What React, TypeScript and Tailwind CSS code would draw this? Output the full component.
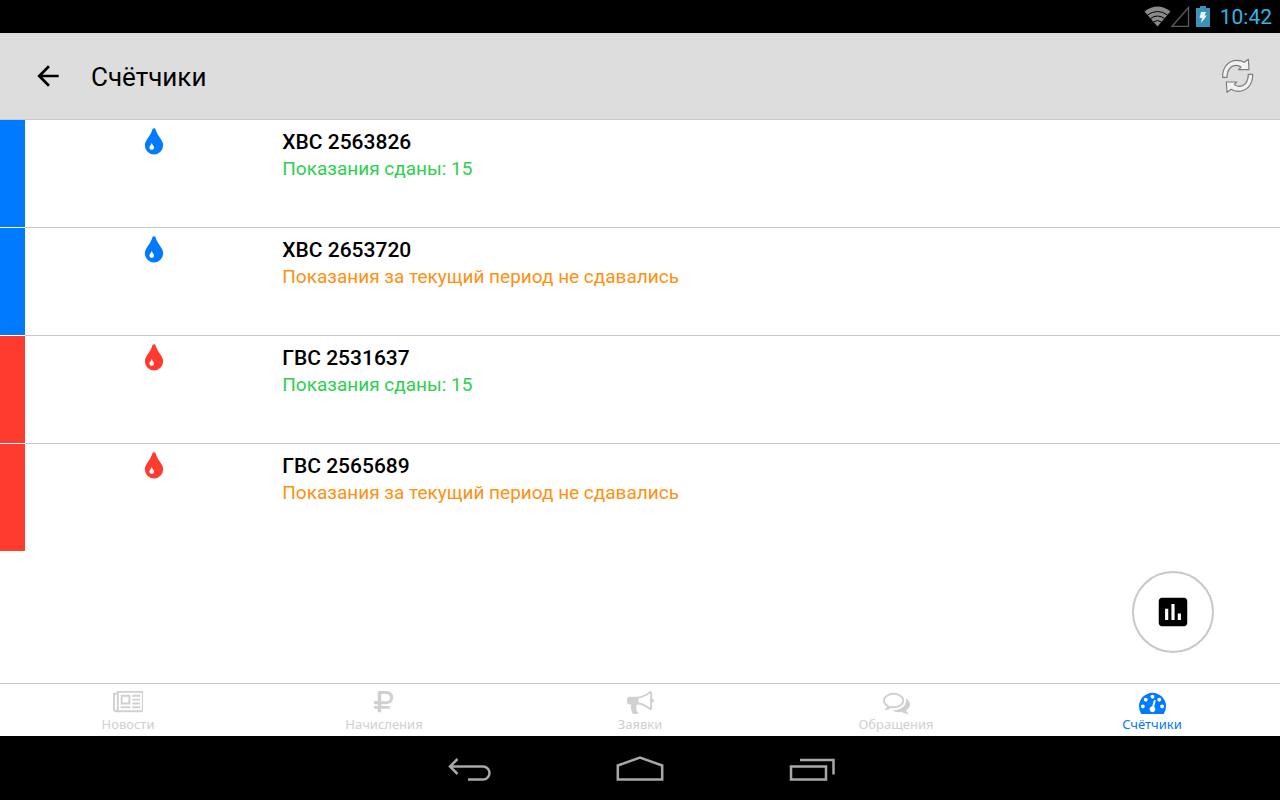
import { useState } from 'react';

type Meter = {
  id: string;
  kind: 'cold' | 'hot';
  title: string;
  status: string;
  submitted: boolean;
};

const METERS: Meter[] = [
  { id: '2563826', kind: 'cold', title: 'ХВС 2563826', status: 'Показания сданы: 15', submitted: true },
  { id: '2653720', kind: 'cold', title: 'ХВС 2653720', status: 'Показания за текущий период не сдавались', submitted: false },
  { id: '2531637', kind: 'hot', title: 'ГВС 2531637', status: 'Показания сданы: 15', submitted: true },
  { id: '2565689', kind: 'hot', title: 'ГВС 2565689', status: 'Показания за текущий период не сдавались', submitted: false },
];

const TABS = [
  {
    label: 'Новости',
    viewBox: '0 0 2048 1792',
    path: 'M1024 512h-384v384h384v-384zm128 640v128h-640v-128h640zm0-768v640h-640v-640h640zm640 768v128h-512v-128h512zm0-256v128h-512v-128h512zm0-256v128h-512v-128h512zm0-256v128h-512v-128h512zm-1536 960v-960h-128v960q0 26 19 45t45 19 45-19 19-45zm1664 0v-1088h-1536v1088q0 33-11 64h1483q26 0 45-19t19-45zm128-1216v1216q0 80-56 136t-136 56h-1664q-80 0-136-56t-56-136v-1088h256v-128h1792z',
  },
  {
    label: 'Начисления',
    viewBox: '0 0 1792 1792',
    path: 'M1265 576q0-105-72-173t-185-68h-328v482h328q113 0 185-68t72-173zm210 0q0 190-124.5 311.5t-319.5 121.5h-351v118h527q14 0 23 9t9 23v128q0 14-9 23t-23 9h-527v185q0 14-9.5 23t-22.5 9h-167q-14 0-23-9t-9-23v-185h-224q-14 0-23-9t-9-23v-128q0-14 9-23t23-9h224v-118h-224q-14 0-23-9t-9-23v-149q0-13 9-22.5t23-9.5h224v-629q0-14 9-23t23-9h550q195 0 319.5 121.5t124.5 311.5z',
  },
  {
    label: 'Заявки',
    viewBox: '0 0 1792 1792',
    path: 'M1664 640q53 0 90.5 37.5t37.5 90.5-37.5 90.5-90.5 37.5v384q0 52-38 90t-90 38q-417-347-812-380-58 19-91 66t-31 100.5 40 92.5q-20 33-23 65.5t6 58 33.5 55 48 50 61.5 50.5q-29 58-111.5 83t-168.5 11.5-132-55.5q-7-23-29.5-87.5t-32-94.5-23-89-15-101 3.5-98.5 22-110.5h-122q-66 0-113-47t-47-113v-192q0-66 47-113t113-47h480q435 0 896-384 52 0 90 38t38 90v384zm-128 604v-954q-394 302-768 343v270q377 42 768 341z',
  },
  {
    label: 'Обращения',
    viewBox: '0 0 1792 1792',
    path: 'M704 384q-153 0-286 52t-211.5 141-78.5 191q0 82 53 158t149 132l97 56-35 84q34-20 62-39l44-31 53 10q78 14 153 14 153 0 286-52t211.5-141 78.5-191-78.5-191-211.5-141-286-52zm0-128q191 0 353.5 68.5t256.5 186.5 94 257-94 257-256.5 186.5-353.5 68.5q-86 0-176-16-124 88-278 128-36 9-86 16h-3q-11 0-20.5-8t-11.5-21q-1-3-1-6.5t.5-6.5 2-6l2.5-5 3.5-5.5 4-5 4.5-5 4-4.5q5-6 23-25t26-29.5 22.5-29 25-38.5 20.5-44q-124-72-195-177t-71-224q0-139 94-257t256.5-186.5 353.5-68.5zm822 1169q10 24 20.5 44t25 38.5 22.5 29 26 29.5 23 25q1 1 4 4.5t4.5 5 4 5 3.5 5.5l2.5 5 2 6 .5 6.5-1 6.5q-3 14-13 22t-22 7q-50-7-86-16-154-40-278-128-90 16-176 16-271 0-472-132 58 4 88 4 161 0 309-45t264-129q125-92 192-212t67-254q0-77-23-152 129 71 204 178t75 230q0 120-71 224.5t-195 176.5z',
  },
  {
    label: 'Счётчики',
    viewBox: '0 0 1792 1792',
    path: 'M384 1152q0-53-37.5-90.5t-90.5-37.5-90.5 37.5-37.5 90.5 37.5 90.5 90.5 37.5 90.5-37.5 37.5-90.5zm192-448q0-53-37.5-90.5t-90.5-37.5-90.5 37.5-37.5 90.5 37.5 90.5 90.5 37.5 90.5-37.5 37.5-90.5zm428 481l101-382q6-26-7.5-48.5t-38.5-29.5-48 6.5-30 39.5l-101 382q-60 5-107 43.5t-63 98.5q-20 77 20 146t117 89 146-20 89-117q16-60-6-117t-72-91zm660-33q0-53-37.5-90.5t-90.5-37.5-90.5 37.5-37.5 90.5 37.5 90.5 90.5 37.5 90.5-37.5 37.5-90.5zm-640-640q0-53-37.5-90.5t-90.5-37.5-90.5 37.5-37.5 90.5 37.5 90.5 90.5 37.5 90.5-37.5 37.5-90.5zm448 192q0-53-37.5-90.5t-90.5-37.5-90.5 37.5-37.5 90.5 37.5 90.5 90.5 37.5 90.5-37.5 37.5-90.5zm320 448q0 261-141 483-19 29-54 29h-1402q-35 0-54-29-141-221-141-483 0-182 71-348t191-286 286-191 348-71 348 71 286 191 191 286 71 348z',
  },
];

const REFRESH_ARROW =
  'M278 233C277 202 296 182 321 182C330 182 337 184 343 188L355 179L357 210L326 210L333 202C328 198 324 197 319 197C302 197 291 211 291 233Z';

function StatusBar() {
  return (
    <div className="flex h-[33px] shrink-0 items-center justify-end bg-black pr-2">
      <svg className="h-[21px] w-[27px]" viewBox="0 0 27 21" fill="none">
        <path d="M0.5 5.5Q13.5 -4.5 26.5 5.5L13.5 20.5Z" fill="#8a8a8a" />
        <path d="M3.5 9Q13.5 2 23.5 9M6.5 12.5Q13.5 7.5 20.5 12.5M9.5 16Q13.5 13 17.5 16" stroke="#000" />
      </svg>
      <svg className="h-[21px] w-[19px]" viewBox="0 0 19 21" fill="none">
        <path d="M17.5 1.5V20.5H0.9Z" stroke="#5c5c5c" strokeWidth="1.3" />
      </svg>
      <svg className="ml-1.5 h-[21px] w-[14px]" viewBox="0 0 14 21">
        <path d="M4 0H10V2H14V21H0V2H4Z" fill="#3a93bb" />
        <path d="M5 6H10L8.5 9.5H11L5 17L6 12H3.5Z" fill="#e6f6fc" />
      </svg>
      <time className="ml-2.5 pt-px text-[21px] leading-8 text-[#33b5e5]">10:42</time>
    </div>
  );
}

function Header() {
  return (
    <header className="flex h-[87px] shrink-0 items-center border-b border-[#c8c8c8] bg-[#dddddd] pr-[25px] pl-8">
      <button type="button" aria-label="Назад" className="flex size-8 items-center justify-center">
        <svg className="size-8" viewBox="0 0 24 24" fill="#000">
          <path d="M20 11H7.83l5.59-5.59L12 4l-8 8 8 8 1.41-1.41L7.83 13H20v-2z" />
        </svg>
      </button>
      <h1 className="ml-[27px] flex-1 pt-0.5 text-[26px] leading-8 text-black">Счётчики</h1>
      <button type="button" aria-label="Обновить" className="flex items-center">
        <svg
          className="h-[38px] w-[35px]"
          viewBox="270 172 105 114"
          fill="#f2f2f2"
          stroke="#7c7c7c"
          strokeWidth="3.5"
          strokeLinejoin="round"
        >
          <path d={REFRESH_ARROW} />
          <path d={REFRESH_ARROW} transform="rotate(180 323 228.5)" />
        </svg>
      </button>
    </header>
  );
}

function MeterRow({ meter }: { meter: Meter }) {
  const cold = meter.kind === 'cold';
  return (
    <li className="group flex h-[108px]">
      <div className={`mb-px w-[25px] ${cold ? 'bg-[#007aff]' : 'bg-[#ff3b30]'}`} />
      <div className="flex flex-1 border-b border-[#c8c8c8] group-last:border-transparent">
        <div className="flex w-[20.5%] justify-center pt-[7px]">
          <svg className={`size-8 ${cold ? 'text-[#007aff]' : 'text-[#ff3b30]'}`} viewBox="0 0 1792 1792" fill="currentColor">
            <path d="M896 1152q0-36-20-69-1-1-15.5-22.5t-25.5-38-25-44-21-50.5q-4-16-21-16t-21 16q-7 23-21 50.5t-25 44-25.5 38-15.5 22.5q-20 33-20 69 0 53 37.5 90.5t90.5 37.5 90.5-37.5 37.5-90.5zm512-128q0 212-150 362t-362 150-362-150-150-362q0-145 81-275 6-9 62.5-90.5t101-151 99.5-178 83-201.5q9-30 34-47t51-17 51.5 17 33.5 47q28 93 83 201.5t99.5 178 101 151 62.5 90.5q81 127 81 275z" />
          </svg>
        </div>
        <div className="flex-1 pt-[9px]">
          <h2 className="text-[21px] leading-[27px] font-medium text-black">{meter.title}</h2>
          <p className={`text-[19px] leading-[26px] ${meter.submitted ? 'text-[#2bd04e]' : 'text-[#ff9010]'}`}>
            {meter.status}
          </p>
        </div>
      </div>
    </li>
  );
}

function TabBar() {
  const [active, setActive] = useState('Счётчики');

  return (
    <nav className="flex h-[53px] shrink-0 border-t border-[#c8c8c8] bg-white">
      {TABS.map((tab) => (
        <button
          key={tab.label}
          type="button"
          onClick={() => setActive(tab.label)}
          className={`flex flex-1 flex-col items-center pt-[5px] ${tab.label === active ? 'text-[#007aff]' : 'text-[#d0d0d0]'}`}
        >
          <svg className="h-[27px]" viewBox={tab.viewBox} fill="currentColor">
            <path d={tab.path} />
          </svg>
          <span className="font-['Noto_Sans',sans-serif] text-[13px] leading-4">{tab.label}</span>
        </button>
      ))}
    </nav>
  );
}

function SystemNav() {
  return (
    <div className="flex h-16 shrink-0 items-center justify-center gap-[124px] bg-black pt-[3px]">
      <button type="button" aria-label="Системная кнопка назад">
        <svg className="h-8 w-12" viewBox="0 0 48 32" fill="none" stroke="#a8a8a8" strokeWidth="2.5">
          <path d="M13.5 5L6 12.5L13.5 20M6 12.5H39A6.5 6.5 0 0 1 39 25.5H24" />
        </svg>
      </button>
      <button type="button" aria-label="Домой">
        <svg className="h-8 w-12" viewBox="0 0 48 32" fill="none" stroke="#a8a8a8" strokeWidth="2.5">
          <path d="M1.8 25.5V11.5L24 3.5L46.2 11.5V25.5Z" />
        </svg>
      </button>
      <button type="button" aria-label="Недавние приложения">
        <svg className="h-8 w-12" viewBox="0 0 48 32" fill="none" stroke="#a8a8a8" strokeWidth="2.5">
          <path d="M3 12.5H38V25.5H3ZM12 6H45.5V20.5" />
        </svg>
      </button>
    </div>
  );
}

export default function App() {
  return (
    <div className="flex min-h-screen flex-col bg-white font-['Roboto',sans-serif]">
      <StatusBar />
      <Header />
      <main className="relative flex-1">
        <ul>
          {METERS.map((meter) => (
            <MeterRow key={meter.id} meter={meter} />
          ))}
        </ul>
        <button
          type="button"
          aria-label="Статистика"
          className="absolute right-[66px] bottom-[30px] flex size-[82px] items-center justify-center rounded-full border-2 border-[#c8c8c8] bg-white"
        >
          <svg className="size-[38px]" viewBox="0 0 24 24" fill="#000">
            <path d="M19 3H5c-1.1 0-2 .9-2 2v14c0 1.1.9 2 2 2h14c1.1 0 2-.9 2-2V5c0-1.1-.9-2-2-2zM9 17H7v-7h2v7zm4 0h-2V7h2v10zm4 0h-2v-4h2v4z" />
          </svg>
        </button>
      </main>
      <TabBar />
      <SystemNav />
    </div>
  );
}
